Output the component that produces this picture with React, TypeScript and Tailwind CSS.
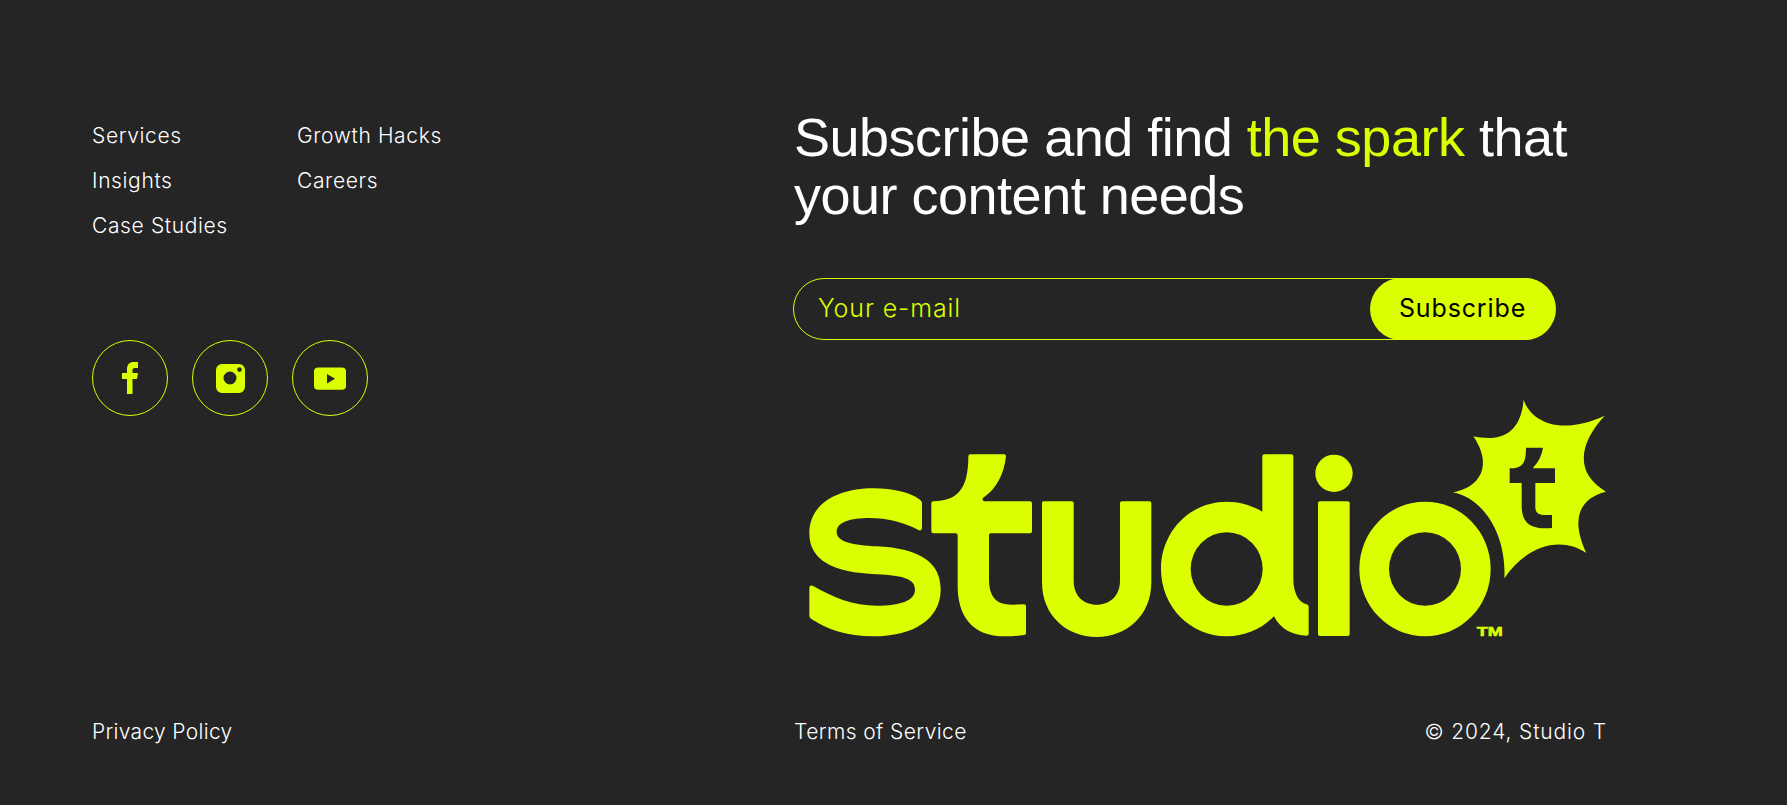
import type { ReactNode } from "react";

function Circle({ children }: { children: ReactNode }) {
  return (
    <a className="flex h-[76px] w-[76px] items-center justify-center rounded-full border-[1.5px] border-[#dbff00]">
      {children}
    </a>
  );
}

function Logo() {
  return (
    <svg className="block" width="820" height="250" viewBox="60 45 2460 750" fill="#dbff00" fillRule="evenodd">
      <path d="M88 628Q88 617 98 620C160 655 220 680 290 680C360 680 405 665 405 632C405 600 370 590 290 586C160 580 88 545 88 462C88 370 180 328 280 328C340 328 390 340 420 362Q426 366 426 372L426 448Q424 458 414 452C370 430 320 417 270 417C210 417 170 430 170 458C170 490 220 498 290 502C420 508 482 550 482 632C482 720 400 772 280 772C200 772 140 750 94 720Q88 716 88 710Z" />
      <path d="M565 232Q565 226 571 226L672 226Q678 226 678 232C672 285 650 330 610 356Q604 362 612 367L750 367Q756 367 756 373L756 457Q756 463 750 463L632 463Q627 463 627 469L627 600C627 655 650 677 695 677L732 676Q738 676 738 682L738 762Q738 768 732 768C700 772 690 772 675 772C575 772 533 710 533 620L533 469Q533 463 527 463L460 463Q454 463 454 457L454 373Q454 367 460 367C530 365 565 335 565 232Z" />
      <path d="M786 372Q786 367 791 367L875 367Q881 367 881 372L881 605C881 650 910 677 950 677C990 677 1020 650 1020 605L1020 372Q1020 367 1026 367L1108 367Q1114 367 1114 372L1114 610C1114 710 1040 774 950 774C860 774 786 710 786 610Z" />
      <path d="M1447 232Q1447 226 1453 226L1534 226Q1540 226 1540 232L1540 600C1540 640 1555 670 1580 676Q1586 677 1586 684L1586 764Q1586 770 1580 770C1540 770 1500 750 1482 712C1445 750 1395 772 1340 772C1230 772 1143 682 1143 570C1143 458 1230 368 1340 368C1380 368 1418 380 1447 398ZM1448 570A108 110 0 1 0 1232 570A108 110 0 1 0 1448 570Z" />
      <g transform="translate(1380 0)">
        <circle cx="282" cy="283" r="56" />
        <rect x="234" y="367" width="95" height="404" rx="6" />
        <path d="M752 570A197 202 0 1 1 358 570A197 202 0 1 1 752 570ZM663 570A108 110 0 1 0 447 570A108 110 0 1 0 663 570Z" />
        <path d="M700 172C750 182 840 190 851 62C870 120 950 175 1094 110C1020 190 1000 280 1098 338C1010 360 995 430 1039 522C960 470 860 500 793 598C800 480 740 360 638 340C720 325 760 260 700 172ZM858 206C858 250 850 268 809 268L809 312L845 312L845 380C845 440 880 452 936 447L936 408L915 408C895 408 886 400 886 385L886 312L945 312L945 268L880 268L880 265C895 250 905 230 909 206Z" />
        <text x="710" y="770" fontFamily="Liberation Sans, sans-serif" fontWeight="700" fontSize="36" textLength="78" lengthAdjust="spacingAndGlyphs" stroke="#dbff00" strokeWidth="1.5">
          TM
        </text>
      </g>
    </svg>
  );
}

export default function App() {
  const body = "font-['Inter',sans-serif] font-[350] text-[21px] leading-[28px] text-white";
  return (
    <div className="flex min-h-screen flex-col justify-between bg-[#252525] pl-[92px] pr-[180px] pt-[108px] pb-[59px]">
      <div className="grid grid-cols-[702px_1fr]">
        <div className="pt-[14px]">
          <nav className={`grid w-[400px] grid-cols-[205px_1fr] gap-y-[17px] tracking-[0.03em] ${body}`}>
            <a>Services</a>
            <a>Growth Hacks</a>
            <a>Insights</a>
            <a>Careers</a>
            <a>Case Studies</a>
          </nav>
          <div className="mt-[100px] flex gap-6">
            <Circle>
              <svg width="16" height="32" viewBox="0 0 16 32" fill="#dbff00">
                <path d="M5 32V17H0V11H5V7C5 2.500 7.800 0 11.500 0H16V6H13C11.300 6 10.500 6.800 10.500 8.300V11H16L15 17H10.500V32Z" />
              </svg>
            </Circle>
            <Circle>
              <svg width="29" height="29" viewBox="0 0 29 29" fill="#dbff00" fillRule="evenodd">
                <path d="M6 0H23A6 6 0 0 1 29 6V23A6 6 0 0 1 23 29H6A6 6 0 0 1 0 23V6A6 6 0 0 1 6 0ZM14 7.500A6.500 6.500 0 1 0 14 20.500A6.500 6.500 0 1 0 14 7.500ZM23.500 3.300A2.300 2.300 0 1 0 23.500 7.900A2.300 2.300 0 1 0 23.500 3.300Z" />
              </svg>
            </Circle>
            <Circle>
              <svg width="32" height="23" viewBox="0 0 32 23" fill="#dbff00" fillRule="evenodd">
                <path d="M4 0.500H28C30.500 0.500 32 2 32 4.500V19C32 21.500 30.500 22.700 28 22.700H4C1.500 22.700 0 21.500 0 19V4.500C0 2 1.500 0.500 4 0.500ZM13 7V16.500L21 11.700Z" />
              </svg>
            </Circle>
          </div>
        </div>
        <div>
          <h2 className="font-['Liberation_Sans',sans-serif] text-[54px] leading-[58px] tracking-[-0.5px] whitespace-nowrap text-white">
            Subscribe and find <span className="text-[#dbff00]">the spark</span> that
            <br />
            your content needs
          </h2>
          <form className="mt-[54px] -ml-px flex h-[62px] w-[762px] items-center rounded-full border-[1.5px] border-[#dbff00]">
            <input
              placeholder="Your e-mail"
              className="min-w-0 flex-1 bg-transparent pl-6 font-['Inter',sans-serif] text-[25px] font-[350] tracking-[0.035em] text-[#dbff00] outline-none placeholder:text-[#dbff00]"
            />
            <button
              type="button"
              className="-m-[1.5px] h-[62px] w-[186px] rounded-full bg-[#dbff00] font-['Inter',sans-serif] text-[25px] font-normal tracking-[0.035em] text-black"
            >
              Subscribe
            </button>
          </form>
          <div className="mt-[54px] ml-[6px]">
            <Logo />
          </div>
        </div>
      </div>
      <div className={`grid grid-cols-[702px_1fr_auto] ${body}`}>
        <a className="tracking-[0.015em]">Privacy Policy</a>
        <a className="tracking-[0.02em]">Terms of Service</a>
        <span className="tracking-[0.04em]">© 2024, Studio T</span>
      </div>
    </div>
  );
}
